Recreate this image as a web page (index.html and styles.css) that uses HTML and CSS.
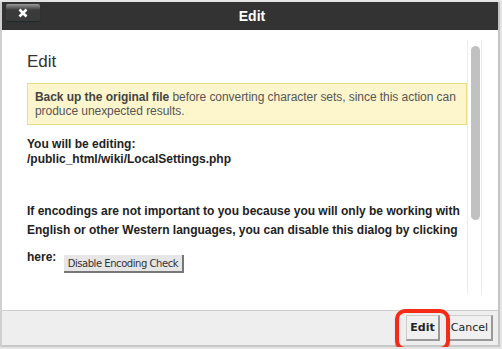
FILE: index.html
```html
<!DOCTYPE html>
<html lang="en">

<head>
    <meta charset="UTF-8">
    <meta name="viewport" content="width=device-width, initial-scale=1.0">
    <title>Edit</title>
    <link rel="stylesheet" href="styles.css">
</head>

<body>
    <div class="dialog">
        <div class="header">
            <button class="close-btn" aria-label="Close">
                <svg width="10" height="10" viewBox="0 0 10 10">
                    <path d="M1.5 1.5 L8.5 8.5 M8.5 1.5 L1.5 8.5" stroke="#fff" stroke-width="2.6" />
                </svg>
            </button>
            <div class="title">Edit</div>
            <div></div>
        </div>

        <div class="main">
            <div class="content">
                <h2>Edit</h2>

                <div class="warning">
                    <b>Back up the original file</b> before converting character sets, since this action can
                    produce unexpected results.
                </div>

                <p class="file-info">
                    You will be editing:<br>
                    /public_html/wiki/LocalSettings.php
                </p>

                <p class="encoding-info">
                    If encodings are not important to you because you will only be working with
                    English or other Western languages, you can disable this dialog by clicking
                    here:
                    <button class="small-btn">Disable Encoding Check</button>
                </p>
            </div>

            <div class="scroll-col">
                <div class="track">
                    <div class="thumb"></div>
                </div>
            </div>
        </div>

        <div class="footer">
            <div class="edit-wrap">
                <button class="btn btn-primary">Edit</button>
                <div class="highlight"></div>
            </div>
            <button class="btn">Cancel</button>
        </div>
    </div>
</body>

</html>
```

FILE: styles.css
```css
body {
    margin: 0;
    background-color: #e4e4e4;
    font-family: "Liberation Sans", Arial, sans-serif;
}

.dialog {
    width: 496px;
    margin-top: 2px;
    border-left: 2px solid #cfcfcf;
    border-right: 2px solid #c4c4c4;
    background-color: white;
}

.header {
    height: 28px;
    background-color: #333;
    display: grid;
    grid-template-columns: 1fr auto 1fr;
    align-items: start;
}

.close-btn {
    justify-self: start;
    width: 34px;
    height: 17px;
    margin: 2px 0 0 4px;
    padding: 0;
    border: none;
    border-radius: 2px;
    background: linear-gradient(#9a9a9a 0, #6a6a6a 3px, #3b3b3b 6px, #3a3a3a 100%);
    box-shadow: 0 1px 1px #1d2a2e;
    display: flex;
    align-items: center;
    justify-content: center;
}

.title {
    color: white;
    font-weight: bold;
    font-size: 14px;
    line-height: 28px;
    padding-left: 4px;
}

.main {
    height: 280px;
    display: flex;
}

.content {
    flex: 1;
    padding: 23px 0 0 25px;
    color: #222;
    font-size: 12px;
}

h2 {
    margin: 0 0 12px;
    font-size: 17px;
    font-weight: normal;
    color: #333;
    line-height: 18px;
}

.warning {
    background-color: #fdf6cd;
    border: 1px solid #e9dc84;
    padding: 6px 0 6px 7px;
    color: #555;
    line-height: 14px;
    letter-spacing: -0.05px;
}

.warning b {
    color: #444;
}

.file-info {
    margin: 12px 0 0;
    font-weight: bold;
    line-height: 15px;
}

.encoding-info {
    margin: 35px 0 0;
    font-weight: bold;
    line-height: 19px;
}

.small-btn {
    font-family: "DejaVu Sans", sans-serif;
    font-size: 10px;
    letter-spacing: -0.45px;
    color: #333;
    background-color: #e6e6e6;
    border: none;
    border-right: 2px solid #777;
    border-bottom: 2px solid #777;
    padding: 3px 4px 2px;
    margin: 15px 0 0 4px;
    vertical-align: -6px;
}

.scroll-col {
    width: 31px;
    padding-top: 10px;
}

.track {
    width: 15px;
    height: 254px;
    border-left: 1px solid #ececec;
    border-right: 1px solid #ececec;
    padding: 6px 1px 0 3px;
    box-sizing: border-box;
}

.thumb {
    width: 9px;
    height: 174px;
    border-radius: 5px;
    background-color: #c1c1c1;
}

.footer {
    height: 34px;
    background-color: #eee;
    border-top: 1px solid #cdcdcd;
    border-bottom: 2px solid #c8c8c8;
    display: flex;
    justify-content: flex-end;
    align-items: center;
    gap: 7px;
    padding-right: 5px;
}

.edit-wrap {
    position: relative;
    display: flex;
}

.highlight {
    position: absolute;
    top: -6px;
    bottom: -10px;
    left: -11px;
    right: -10px;
    border: 4px solid #f52b17;
    border-radius: 10px;
    box-shadow: 0 1px 1px rgba(0, 0, 0, 0.3);
}

.btn {
    font-family: "DejaVu Sans", sans-serif;
    font-size: 11px;
    color: #222;
    background-color: #f0f0f0;
    border: 1px solid #ccc;
    border-right: 2px solid #999;
    border-bottom: 2px solid #999;
    padding: 5px 3px;
}

.btn-primary {
    font-weight: bold;
}
```
